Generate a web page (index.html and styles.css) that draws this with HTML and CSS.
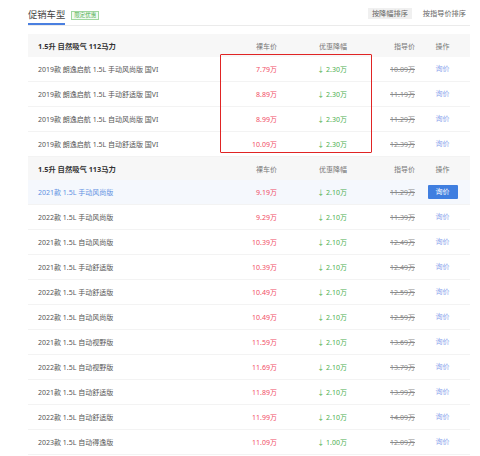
FILE: index.html
```html
<!DOCTYPE html>
<html lang="zh-CN">
<head>
<meta charset="utf-8">
<title>促销车型</title>
<link rel="stylesheet" href="styles.css">
</head>
<body>
<div class="page">
  <div class="tabbar">
    <div class="tab">促销车型</div>
    <span class="badge">限定优惠</span>
    <div class="sorts">
      <span class="sort on">按降幅排序</span>
      <span class="sort">按指导价排序</span>
    </div>
  </div>

  <div class="table">
    <div class="row head">
      <div class="name">1.5升 自然吸气 112马力</div>
      <div class="c">裸车价</div>
      <div class="c">优惠降幅</div>
      <div class="c">指导价</div>
      <div class="op">操作</div>
    </div>
    <div class="row"><div class="name">2019款 朗逸启航 1.5L 手动风尚版 国VI</div><div class="c price">7.79万</div><div class="c drop">↓ 2.30万</div><div class="c guide">10.09万</div><div class="op"><a class="ask">询价</a></div></div>
    <div class="row"><div class="name">2019款 朗逸启航 1.5L 手动舒适版 国VI</div><div class="c price">8.89万</div><div class="c drop">↓ 2.30万</div><div class="c guide">11.19万</div><div class="op"><a class="ask">询价</a></div></div>
    <div class="row"><div class="name">2019款 朗逸启航 1.5L 自动风尚版 国VI</div><div class="c price">8.99万</div><div class="c drop">↓ 2.30万</div><div class="c guide">11.29万</div><div class="op"><a class="ask">询价</a></div></div>
    <div class="row"><div class="name">2019款 朗逸启航 1.5L 自动舒适版 国VI</div><div class="c price">10.09万</div><div class="c drop">↓ 2.30万</div><div class="c guide">12.39万</div><div class="op"><a class="ask">询价</a></div></div>

    <div class="row head">
      <div class="name">1.5升 自然吸气 113马力</div>
      <div class="c">裸车价</div>
      <div class="c">优惠降幅</div>
      <div class="c">指导价</div>
      <div class="op">操作</div>
    </div>
    <div class="row hover"><div class="name">2021款 1.5L 手动风尚版</div><div class="c price">9.19万</div><div class="c drop">↓ 2.10万</div><div class="c guide">11.29万</div><div class="op"><a class="ask btn">询价</a></div></div>
    <div class="row"><div class="name">2022款 1.5L 手动风尚版</div><div class="c price">9.29万</div><div class="c drop">↓ 2.10万</div><div class="c guide">11.39万</div><div class="op"><a class="ask">询价</a></div></div>
    <div class="row"><div class="name">2021款 1.5L 自动风尚版</div><div class="c price">10.39万</div><div class="c drop">↓ 2.10万</div><div class="c guide">12.49万</div><div class="op"><a class="ask">询价</a></div></div>
    <div class="row"><div class="name">2021款 1.5L 手动舒适版</div><div class="c price">10.39万</div><div class="c drop">↓ 2.10万</div><div class="c guide">12.49万</div><div class="op"><a class="ask">询价</a></div></div>
    <div class="row"><div class="name">2022款 1.5L 手动舒适版</div><div class="c price">10.49万</div><div class="c drop">↓ 2.10万</div><div class="c guide">12.59万</div><div class="op"><a class="ask">询价</a></div></div>
    <div class="row"><div class="name">2022款 1.5L 自动风尚版</div><div class="c price">10.49万</div><div class="c drop">↓ 2.10万</div><div class="c guide">12.59万</div><div class="op"><a class="ask">询价</a></div></div>
    <div class="row"><div class="name">2021款 1.5L 自动视野版</div><div class="c price">11.59万</div><div class="c drop">↓ 2.10万</div><div class="c guide">13.69万</div><div class="op"><a class="ask">询价</a></div></div>
    <div class="row"><div class="name">2022款 1.5L 自动视野版</div><div class="c price">11.69万</div><div class="c drop">↓ 2.10万</div><div class="c guide">13.79万</div><div class="op"><a class="ask">询价</a></div></div>
    <div class="row"><div class="name">2021款 1.5L 自动舒适版</div><div class="c price">11.89万</div><div class="c drop">↓ 2.10万</div><div class="c guide">13.99万</div><div class="op"><a class="ask">询价</a></div></div>
    <div class="row"><div class="name">2022款 1.5L 自动舒适版</div><div class="c price">11.99万</div><div class="c drop">↓ 2.10万</div><div class="c guide">14.09万</div><div class="op"><a class="ask">询价</a></div></div>
    <div class="row"><div class="name">2023款 1.5L 自动得逸版</div><div class="c price">11.09万</div><div class="c drop">↓ 1.00万</div><div class="c guide">12.09万</div><div class="op"><a class="ask">询价</a></div></div>

    <div class="mark"></div>
  </div>
</div>
</body>
</html>
```

FILE: styles.css
```css
html, body {
  margin: 0;
  padding: 0;
  background: #ffffff;
}

body {
  font-family: "Noto Sans", "Noto Sans CJK SC", "Liberation Sans", sans-serif;
  color: #333333;
}

.page {
  padding: 0 10px 0 28px;
}

.tabbar {
  display: flex;
  align-items: flex-start;
  padding-top: 8px;
  border-bottom: 1px solid #ebebeb;
  height: 17px;
}

.tab {
  font-size: 9.3px;
  line-height: 14px;
  color: #444444;
  padding-bottom: 1px;
  border-bottom: 2px solid #4a7fe0;
}

.badge {
  margin: 3px 0 0 6px;
  font-size: 5.5px;
  line-height: 7px;
  padding: 0 2px;
  color: #4fae4f;
  background: #f1fbf1;
  border: 1px solid #9fd79f;
}

.sorts {
  margin-left: auto;
  display: flex;
  gap: 7px;
}

.sort {
  font-size: 7.2px;
  line-height: 11px;
  padding: 0 4px;
  color: #666666;
}

.sort.on {
  background: #f0f0f0;
}

.table {
  position: relative;
  margin-top: 8px;
}

.row {
  display: grid;
  grid-template-columns: 1fr 60px 70px 68px 55px;
  align-items: center;
  height: 25px;
  box-sizing: border-box;
  padding-left: 10px;
  border-bottom: 1px solid #f3f3f3;
  font-size: 7px;
  color: #555555;
}

.row.head {
  height: 23px;
  background: #f7f7f7;
  border-bottom: none;
  color: #777777;
}

.row.head .name {
  font-weight: bold;
  color: #333333;
  font-size: 7.3px;
}

.row.hover {
  background: #f5f8fd;
}

.row.hover .name {
  color: #6090e2;
}

.name {
  white-space: nowrap;
}

.c {
  text-align: right;
  white-space: nowrap;
}

.op {
  text-align: center;
}

.price {
  color: #f14c64;
}

.drop {
  color: #4caf50;
}

.guide {
  color: #8a8a8a;
  text-decoration: line-through;
}

.ask {
  color: #8aa4ec;
  display: inline-block;
  line-height: 14px;
}

.ask.btn {
  background: #3f7ee0;
  color: #ffffff;
  width: 30px;
  border-radius: 1px;
}

.mark {
  position: absolute;
  left: 192px;
  top: 20px;
  width: 152px;
  height: 99px;
  box-sizing: border-box;
  border: 1.5px solid #e02424;
  border-radius: 1px;
  pointer-events: none;
}
```
